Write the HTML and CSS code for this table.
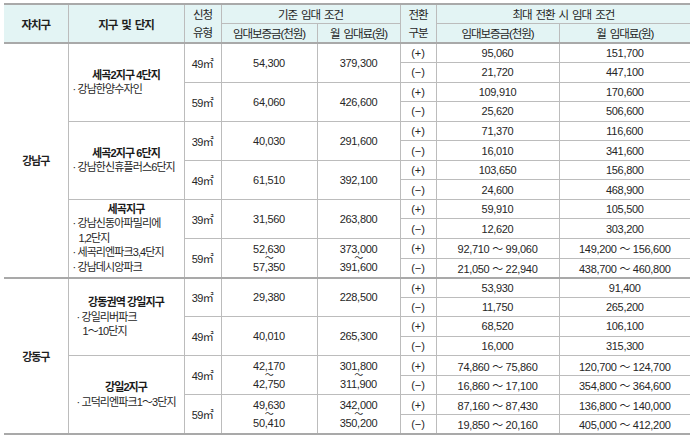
FILE: index.html
```html
<!DOCTYPE html>
<html lang="ko">
<head>
<meta charset="utf-8">
<title>임대 조건</title>
<link rel="stylesheet" href="styles.css">
</head>
<body>
<div class="wrap">
<table class="rent">
  <colgroup>
    <col class="w1"><col class="w2"><col class="w3"><col class="w4"><col class="w5"><col class="w6"><col class="w7"><col class="w8">
  </colgroup>
  <thead>
    <tr class="h1">
      <th rowspan="2" class="ko strong">자치구</th>
      <th rowspan="2" class="ko strong">지구 및 단지</th>
      <th rowspan="2" class="ko two">신청<br>유형</th>
      <th colspan="2" class="ko">기준 임대 조건</th>
      <th rowspan="2" class="ko two">전환<br>구분</th>
      <th colspan="2" class="ko">최대 전환 시 임대 조건</th>
    </tr>
    <tr class="h2">
      <th class="ko">임대보증금(천원)</th>
      <th class="ko">월 임대료(원)</th>
      <th class="ko">임대보증금(천원)</th>
      <th class="ko">월 임대료(원)</th>
    </tr>
  </thead>
  <tbody>
    <tr>
      <td rowspan="12" class="gu ko">강남구</td>
      <td rowspan="4" class="dist"><div class="ttl">세곡2지구 4단지</div><div class="it">· 강남한양수자인</div></td>
      <td rowspan="2" class="area">49㎡</td>
      <td rowspan="2" class="num">54,300</td>
      <td rowspan="2" class="num">379,300</td>
      <td class="sgn">(+)</td><td class="num">95,060</td><td class="num">151,700</td>
    </tr>
    <tr><td class="sgn">(−)</td><td class="num">21,720</td><td class="num">447,100</td></tr>
    <tr>
      <td rowspan="2" class="area">59㎡</td>
      <td rowspan="2" class="num">64,060</td>
      <td rowspan="2" class="num">426,600</td>
      <td class="sgn">(+)</td><td class="num">109,910</td><td class="num">170,600</td>
    </tr>
    <tr><td class="sgn">(−)</td><td class="num">25,620</td><td class="num">506,600</td></tr>
    <tr>
      <td rowspan="4" class="dist"><div class="ttl">세곡2지구 6단지</div><div class="it">· 강남한신휴플러스6단지</div></td>
      <td rowspan="2" class="area">39㎡</td>
      <td rowspan="2" class="num">40,030</td>
      <td rowspan="2" class="num">291,600</td>
      <td class="sgn">(+)</td><td class="num">71,370</td><td class="num">116,600</td>
    </tr>
    <tr><td class="sgn">(−)</td><td class="num">16,010</td><td class="num">341,600</td></tr>
    <tr>
      <td rowspan="2" class="area">49㎡</td>
      <td rowspan="2" class="num">61,510</td>
      <td rowspan="2" class="num">392,100</td>
      <td class="sgn">(+)</td><td class="num">103,650</td><td class="num">156,800</td>
    </tr>
    <tr><td class="sgn">(−)</td><td class="num">24,600</td><td class="num">468,900</td></tr>
    <tr>
      <td rowspan="4" class="dist"><div class="ttl">세곡지구</div><div class="it">· 강남신동아파밀리에<br>1,2단지</div><div class="it">· 세곡리엔파크3,4단지</div><div class="it">· 강남데시앙파크</div></td>
      <td rowspan="2" class="area">39㎡</td>
      <td rowspan="2" class="num">31,560</td>
      <td rowspan="2" class="num">263,800</td>
      <td class="sgn">(+)</td><td class="num">59,910</td><td class="num">105,500</td>
    </tr>
    <tr><td class="sgn">(−)</td><td class="num">12,620</td><td class="num">303,200</td></tr>
    <tr>
      <td rowspan="2" class="area">59㎡</td>
      <td rowspan="2" class="num"><div class="stk"><span>52,630</span><span class="tl">～</span><span>57,350</span></div></td>
      <td rowspan="2" class="num"><div class="stk"><span>373,000</span><span class="tl">～</span><span>391,600</span></div></td>
      <td class="sgn">(+)</td><td class="num">92,710 ～ 99,060</td><td class="num">149,200 ～ 156,600</td>
    </tr>
    <tr><td class="sgn">(−)</td><td class="num">21,050 ～ 22,940</td><td class="num">438,700 ～ 460,800</td></tr>
    <tr class="sep">
      <td rowspan="8" class="gu ko">강동구</td>
      <td rowspan="4" class="dist"><div class="ttl">강동권역 강일지구</div><div class="it it2">· 강일리버파크<br>1～10단지</div></td>
      <td rowspan="2" class="area">39㎡</td>
      <td rowspan="2" class="num">29,380</td>
      <td rowspan="2" class="num">228,500</td>
      <td class="sgn">(+)</td><td class="num">53,930</td><td class="num">91,400</td>
    </tr>
    <tr><td class="sgn">(−)</td><td class="num">11,750</td><td class="num">265,200</td></tr>
    <tr>
      <td rowspan="2" class="area">49㎡</td>
      <td rowspan="2" class="num">40,010</td>
      <td rowspan="2" class="num">265,300</td>
      <td class="sgn">(+)</td><td class="num">68,520</td><td class="num">106,100</td>
    </tr>
    <tr><td class="sgn">(−)</td><td class="num">16,000</td><td class="num">315,300</td></tr>
    <tr>
      <td rowspan="4" class="dist"><div class="ttl">강일2지구</div><div class="it it2">· 고덕리엔파크1～3단지</div></td>
      <td rowspan="2" class="area">49㎡</td>
      <td rowspan="2" class="num"><div class="stk"><span>42,170</span><span class="tl">～</span><span>42,750</span></div></td>
      <td rowspan="2" class="num"><div class="stk"><span>301,800</span><span class="tl">～</span><span>311,900</span></div></td>
      <td class="sgn">(+)</td><td class="num">74,860 ～ 75,860</td><td class="num">120,700 ～ 124,700</td>
    </tr>
    <tr><td class="sgn">(−)</td><td class="num">16,860 ～ 17,100</td><td class="num">354,800 ～ 364,600</td></tr>
    <tr>
      <td rowspan="2" class="area">59㎡</td>
      <td rowspan="2" class="num"><div class="stk"><span>49,630</span><span class="tl">～</span><span>50,410</span></div></td>
      <td rowspan="2" class="num"><div class="stk"><span>342,000</span><span class="tl">～</span><span>350,200</span></div></td>
      <td class="sgn">(+)</td><td class="num">87,160 ～ 87,430</td><td class="num">136,800 ～ 140,000</td>
    </tr>
    <tr><td class="sgn">(−)</td><td class="num">19,850 ～ 20,160</td><td class="num">405,000 ～ 412,200</td></tr>
  </tbody>
</table>
</div>
</body>
</html>
```
FILE: styles.css
```css
html, body {
  margin: 0;
  padding: 0;
  background: #ffffff;
}
body {
  font-family: "Liberation Sans", "Noto Sans CJK KR", sans-serif;
  font-size: 11px;
  color: #262626;
}
.wrap {
  padding: 3px 0 0 4px;
}
.rent {
  border-collapse: collapse;
  table-layout: fixed;
  width: 686px;
  border-top: 2px solid #a9a9a9;
  border-bottom: 2px solid #a9a9a9;
  border-left: hidden;
  border-right: hidden;
}
.w1 { width: 64px; }
.w2 { width: 116px; }
.w3 { width: 37px; }
.w4 { width: 96px; }
.w5 { width: 83px; }
.w6 { width: 36px; }
.w7 { width: 123px; }
.w8 { width: 131px; }

.rent th,
.rent td {
  padding: 0;
  text-align: center;
  vertical-align: middle;
  border: 1px solid #bcbcbc;
  white-space: nowrap;
  overflow: hidden;
}
.rent thead th {
  background: #e3f4f4;
  font-weight: normal;
  color: #1f1f1f;
  font-size: 11.5px;
  word-spacing: 2px;
}
.h1 { height: 19px; }
.h2 { height: 20px; }
.rent tbody tr { height: 19.55px; }
.rent tbody tr:first-child td {
  border-top: 2px solid #a9a9a9;
}
.rent tbody tr.sep td {
  border-top: 2px solid #a9a9a9;
}
.ko {
  letter-spacing: -1.1px;
}
.strong {
  font-weight: bold !important;
}
.two {
  line-height: 18px;
}
.gu {
  font-weight: bold;
  color: #1f1f1f;
}
.dist {
  text-align: left !important;
  letter-spacing: -0.9px;
  line-height: 14.5px;
}
.ttl {
  text-align: center;
  font-weight: bold;
  color: #1a1a1a;
}
.it {
  padding-left: 10px;
  text-indent: -6px;
}
.it2 {
  padding-left: 14px;
}
.area {
  letter-spacing: -0.5px;
}
.num {
  letter-spacing: -0.3px;
}
.sgn {
  letter-spacing: 0;
}
.stk span {
  display: block;
  line-height: 12px;
}
.stk .tl {
  height: 6px;
  line-height: 6px;
  font-size: 9px;
}
```
